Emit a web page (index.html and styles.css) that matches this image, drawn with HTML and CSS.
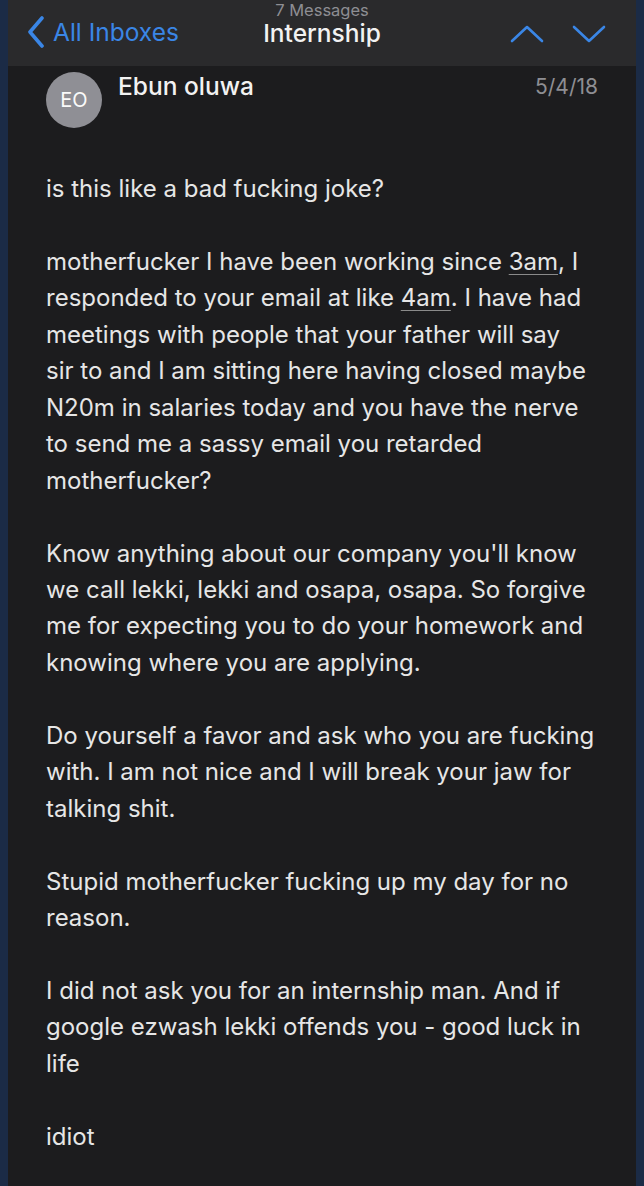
FILE: index.html
```html
<!DOCTYPE html>
<html>
<head>
<meta charset="utf-8">
<link rel="stylesheet" href="styles.css">
</head>
<body>
<div class="frame">
  <header class="nav">
    <div class="back">
      <svg class="back-chev" width="20" height="32" viewBox="0 0 20 32"><path d="M16 2 L4 16 L16 30" fill="none" stroke="#3a86e6" stroke-width="3.6" stroke-linecap="round" stroke-linejoin="round"/></svg>
      <span>All Inboxes</span>
    </div>
    <div class="title">
      <div class="count">7 Messages</div>
      <div class="subject">Internship</div>
    </div>
    <div class="arrows">
      <svg width="36" height="18" viewBox="0 0 36 18"><path d="M3 16 L18 2 L33 16" fill="none" stroke="#3a86e6" stroke-width="2.6" stroke-linecap="round" stroke-linejoin="round"/></svg>
      <svg width="36" height="18" viewBox="0 0 36 18"><path d="M3 2 L18 16 L33 2" fill="none" stroke="#3a86e6" stroke-width="2.6" stroke-linecap="round" stroke-linejoin="round"/></svg>
    </div>
  </header>
  <main class="mail">
    <div class="sender">
      <div class="avatar">EO</div>
      <div class="name">Ebun oluwa</div>
      <div class="date">5/4/18</div>
    </div>
    <div class="content">
      <p>is this like a bad fucking joke?</p>
      <p>motherfucker I have been working since <span class="det">3am</span>, I<br>responded to your email at like <span class="det">4am</span>. I have had<br>meetings with people that your father will say<br>sir to and I am sitting here having closed maybe<br>N20m in salaries today and you have the nerve<br>to send me a sassy email you retarded<br>motherfucker?</p>
      <p>Know anything about our company you'll know<br>we call lekki, lekki and osapa, osapa. So forgive<br>me for expecting you to do your homework and<br>knowing where you are applying.</p>
      <p>Do yourself a favor and ask who you are fucking<br>with. I am not nice and I will break your jaw for<br>talking shit.</p>
      <p>Stupid motherfucker fucking up my day for no<br>reason.</p>
      <p>I did not ask you for an internship man. And if<br>google ezwash lekki offends you - good luck in<br>life</p>
      <p>idiot</p>
    </div>
  </main>
  <footer class="bar"></footer>
</div>
</body>
</html>
```
FILE: styles.css
```css
html, body {
  margin: 0;
  padding: 0;
  height: 100%;
}
body {
  background: #1b2b46;
  font-family: Inter, "Noto Sans", sans-serif;
  -webkit-font-smoothing: antialiased;
}
.frame {
  margin: 0 8px;
  height: 1186px;
  background: #1c1c1e;
  display: flex;
  flex-direction: column;
}
.nav {
  height: 66px;
  background: #2a2a2c;
  display: flex;
  align-items: center;
  position: relative;
  flex-shrink: 0;
}
.back {
  display: flex;
  align-items: center;
  color: #3a86e6;
  font-size: 24.5px;
  padding-left: 18px;
  gap: 7px;
  margin-top: -2px;
}
.title {
  position: absolute;
  left: 0;
  right: 0;
  top: 0;
  text-align: center;
  pointer-events: none;
}
.count {
  color: #8e8e93;
  font-size: 16.5px;
  line-height: 18px;
  padding-top: 1px;
}
.subject {
  color: #f2f2f2;
  font-size: 24.5px;
  font-weight: 500;
  line-height: 28px;
}
.arrows {
  margin-left: auto;
  display: flex;
  gap: 26px;
  padding-right: 29px;
  margin-top: 2px;
}
.mail {
  flex: 1;
  padding: 6px 38px 0 38px;
}
.sender {
  display: flex;
  align-items: flex-start;
}
.avatar {
  width: 56px;
  height: 56px;
  border-radius: 50%;
  background: #8f8f95;
  color: #fafafa;
  font-size: 20px;
  display: flex;
  align-items: center;
  justify-content: center;
  flex-shrink: 0;
}
.name {
  color: #f2f2f2;
  font-size: 24.5px;
  font-weight: 500;
  margin-left: 16px;
  line-height: 30px;
  margin-top: -1px;
}
.date {
  margin-left: auto;
  color: #8e8e93;
  font-size: 21px;
  line-height: 30px;
}
.content {
  margin-top: 43px;
  color: #e6e6e6;
  font-size: 24px;
  line-height: 36.45px;
}
.content p {
  margin: 0 0 36.45px 0;
}
.det {
  text-decoration: underline;
  text-decoration-color: #8a8a8a;
  text-underline-offset: 4px;
  text-decoration-thickness: 1px;
}
.bar {
  height: 18px;
  background: #2c2c2e;
  flex-shrink: 0;
}
```
